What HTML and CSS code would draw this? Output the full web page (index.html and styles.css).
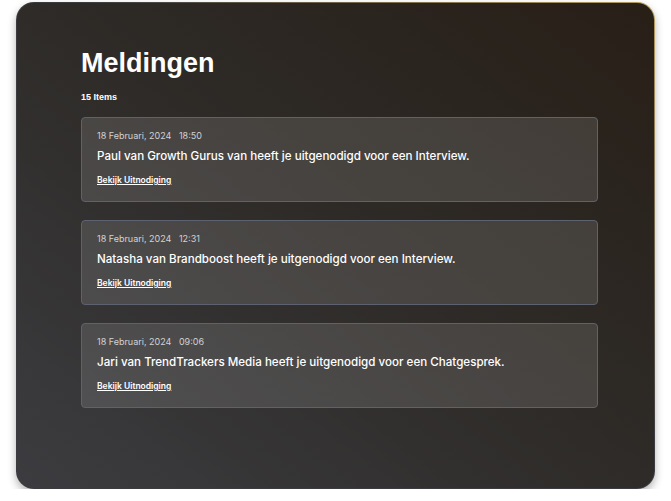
FILE: index.html
```html
<!DOCTYPE html>
<html lang="nl">

<head>
    <meta charset="UTF-8">
    <meta name="viewport" content="width=device-width, initial-scale=1.0">
    <title>Meldingen</title>
    <link rel="stylesheet" href="styles.css">
</head>

<body>
    <div class="panel">
        <h1 class="panel-title">Meldingen</h1>
        <p class="item-count">15 Items</p>

        <div class="notification-list">
            <div class="notification">
                <p class="notification-date">18 Februari, 2024 <span class="time">18:50</span></p>
                <p class="notification-text">Paul van Growth Gurus van heeft je uitgenodigd voor een Interview.</p>
                <a class="notification-link" href="#">Bekijk Uitnodiging</a>
            </div>
            <div class="notification">
                <p class="notification-date">18 Februari, 2024 <span class="time">12:31</span></p>
                <p class="notification-text">Natasha van Brandboost heeft je uitgenodigd voor een Interview.</p>
                <a class="notification-link" href="#">Bekijk Uitnodiging</a>
            </div>
            <div class="notification">
                <p class="notification-date">18 Februari, 2024 <span class="time">09:06</span></p>
                <p class="notification-text">Jari van TrendTrackers Media heeft je uitgenodigd voor een Chatgesprek.</p>
                <a class="notification-link" href="#">Bekijk Uitnodiging</a>
            </div>
        </div>
    </div>
</body>

</html>
```

FILE: styles.css
```css
body {
    margin: 0;
    background-color: #fff;
    font-family: Inter, "Liberation Sans", sans-serif;
}

.panel {
    box-sizing: border-box;
    width: 639px;
    height: 487px;
    margin: 2px 16px 0;
    padding: 44px 56px 0 64px;
    border: 1px solid transparent;
    border-radius: 18px;
    background:
        linear-gradient(to top right, #3c3c40, #2e2b28 50%, #281f17) padding-box,
        linear-gradient(to top right, #3c3c40 55%, #b59c5c) border-box;
    box-shadow: 0px 4px 8px rgba(0, 0, 0, 0.3);
    color: #fff;
}

.panel-title {
    margin: 0;
    font-family: "Liberation Sans", Arial, sans-serif;
    font-size: 27px;
    line-height: 32px;
    font-weight: bold;
}

.item-count {
    margin: 12px 0 14px;
    font-family: "Liberation Sans", Arial, sans-serif;
    font-size: 9px;
    line-height: 12px;
    font-weight: bold;
}

.notification-list {
    display: flex;
    flex-direction: column;
    gap: 18px;
}

.notification {
    padding: 12px 15px 15px;
    border: 1px solid #5d6270;
    border-radius: 4px;
    background-color: rgba(255, 255, 255, 0.12);
}

.notification-date {
    margin: 0 0 6px;
    font-size: 9px;
    line-height: 12px;
    color: #d2d2d2;
}

.time {
    margin-left: 5px;
}

.notification-text {
    margin: 0 0 10px;
    font-size: 11.6px;
    line-height: 16px;
    font-weight: 500;
}

.notification-link {
    display: block;
    width: fit-content;
    font-size: 8.5px;
    line-height: 12px;
    font-weight: 600;
    color: #fff;
    text-decoration: underline;
}
```
